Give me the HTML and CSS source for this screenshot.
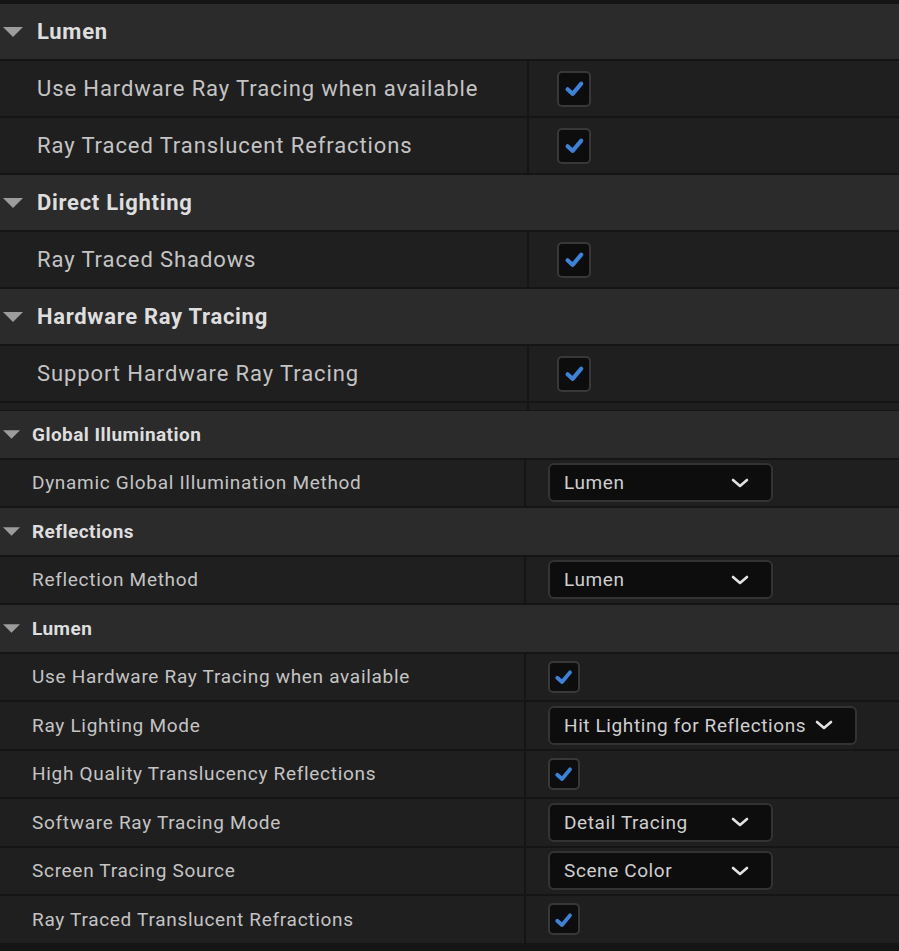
FILE: index.html
```html
<!DOCTYPE html>
<html lang="en">
    <head>
        <meta charset="utf-8" />
        <title>Project Settings - Rendering</title>
        <link rel="stylesheet" href="styles.css">
    </head>
    <body>
        <!-- upper capture, bigger zoom -->
        <section class="panel big">
            <div class="cat"><svg class="arrow" viewBox="0 0 20 10"><polygon points="0,0 20,0 10,10"/></svg>Lumen</div>
            <div class="prop">
                <div class="name">Use Hardware Ray Tracing when available</div>
                <div class="value"><span class="check"><svg viewBox="0 0 20 20"><polyline points="4,11 8.5,15 16,6"/></svg></span></div>
            </div>
            <div class="prop">
                <div class="name">Ray Traced Translucent Refractions</div>
                <div class="value"><span class="check"><svg viewBox="0 0 20 20"><polyline points="4,11 8.5,15 16,6"/></svg></span></div>
            </div>
            <div class="cat"><svg class="arrow" viewBox="0 0 20 10"><polygon points="0,0 20,0 10,10"/></svg>Direct Lighting</div>
            <div class="prop">
                <div class="name">Ray Traced Shadows</div>
                <div class="value"><span class="check"><svg viewBox="0 0 20 20"><polyline points="4,11 8.5,15 16,6"/></svg></span></div>
            </div>
            <div class="cat"><svg class="arrow" viewBox="0 0 20 10"><polygon points="0,0 20,0 10,10"/></svg>Hardware Ray Tracing</div>
            <div class="prop">
                <div class="name">Support Hardware Ray Tracing</div>
                <div class="value"><span class="check"><svg viewBox="0 0 20 20"><polyline points="4,11 8.5,15 16,6"/></svg></span></div>
            </div>
            <div class="prop stub"><div class="name"></div><div class="value"></div></div>
        </section>

        <!-- lower capture -->
        <section class="panel small">
            <div class="cat"><svg class="arrow" viewBox="0 0 20 10"><polygon points="0,0 20,0 10,10"/></svg>Global Illumination</div>
            <div class="prop">
                <div class="name">Dynamic Global Illumination Method</div>
                <div class="value"><span class="combo"><span>Lumen</span><svg viewBox="0 0 18 10"><polyline points="2,2 9,8 16,2"/></svg></span></div>
            </div>
            <div class="cat"><svg class="arrow" viewBox="0 0 20 10"><polygon points="0,0 20,0 10,10"/></svg>Reflections</div>
            <div class="prop">
                <div class="name">Reflection Method</div>
                <div class="value"><span class="combo"><span>Lumen</span><svg viewBox="0 0 18 10"><polyline points="2,2 9,8 16,2"/></svg></span></div>
            </div>
            <div class="cat"><svg class="arrow" viewBox="0 0 20 10"><polygon points="0,0 20,0 10,10"/></svg>Lumen</div>
            <div class="prop">
                <div class="name">Use Hardware Ray Tracing when available</div>
                <div class="value"><span class="check"><svg viewBox="0 0 20 20"><polyline points="4,11 8.5,15 16,6"/></svg></span></div>
            </div>
            <div class="prop">
                <div class="name">Ray Lighting Mode</div>
                <div class="value"><span class="combo"><span>Hit Lighting for Reflections</span><svg viewBox="0 0 18 10"><polyline points="2,2 9,8 16,2"/></svg></span></div>
            </div>
            <div class="prop">
                <div class="name">High Quality Translucency Reflections</div>
                <div class="value"><span class="check"><svg viewBox="0 0 20 20"><polyline points="4,11 8.5,15 16,6"/></svg></span></div>
            </div>
            <div class="prop">
                <div class="name">Software Ray Tracing Mode</div>
                <div class="value"><span class="combo"><span>Detail Tracing</span><svg viewBox="0 0 18 10"><polyline points="2,2 9,8 16,2"/></svg></span></div>
            </div>
            <div class="prop">
                <div class="name">Screen Tracing Source</div>
                <div class="value"><span class="combo"><span>Scene Color</span><svg viewBox="0 0 18 10"><polyline points="2,2 9,8 16,2"/></svg></span></div>
            </div>
            <div class="prop">
                <div class="name">Ray Traced Translucent Refractions</div>
                <div class="value"><span class="check"><svg viewBox="0 0 20 20"><polyline points="4,11 8.5,15 16,6"/></svg></span></div>
            </div>
        </section>
    </body>
</html>
```

FILE: styles.css
```css
*{ margin:0; padding:0; box-sizing:border-box; }
body{ background:#151515;
    font-family: Roboto, "Liberation Sans", sans-serif;
    color:#c4c4c4; }

.panel{ display:flex; flex-direction:column; gap:2px; background:#151515; }

.cat{ display:flex; align-items:center;
    background:#2b2b2b; color:#dedede; font-weight:700; }
.arrow{ fill:#9c9c9c; }

.prop{ display:grid; gap:2px; }
.name, .value{ display:flex; align-items:center; background:#1f1f1f; }

/* checkbox */
.check{ display:flex; align-items:center; justify-content:center;
    background:#0d0d0d; border:2px solid #383838; border-radius:5px; }
.check svg{ width:76%; height:76%; fill:none; stroke:#3b82d9;
    stroke-width:3.6; stroke-linecap:round; stroke-linejoin:round; }

/* dropdown */
.combo{ display:flex; align-items:center; justify-content:space-between;
    min-width:225px; height:39px; padding:0 22px 0 14px; gap:9px;
    background:#0d0d0d; border:2px solid #333; border-radius:6px; color:#cfcfcf; }
.combo svg{ width:18px; height:10px; fill:none; stroke:#e2e2e2;
    stroke-width:2.6; stroke-linecap:round; stroke-linejoin:round; }

/* upper capture */
.big{ padding-top:4px; }
.big .cat, .big .prop{ height:55px; }
.big .cat{ font-size:22px; letter-spacing:.7px; }
.big .arrow{ width:20px; height:10px; margin:0 14px 0 3px; }
.big .prop{ grid-template-columns:527px 1fr; }
.big .name{ padding-left:37px; font-size:22px; letter-spacing:.9px; }
.big .value{ padding-left:28px; }
.big .check{ width:34px; height:36px; }
.big .prop.stub{ height:7px; }

/* lower capture */
.small{ padding-top:1px; }
.small .cat, .small .prop{ height:46.5px; }
.small .cat{ font-size:19px; letter-spacing:.45px; }
.small .arrow{ width:17px; height:9px; margin:0 12px 0 3px; }
.small .prop{ grid-template-columns:524px 1fr; }
.small .name{ padding-left:32px; font-size:19px; letter-spacing:.7px; }
.small .value{ padding-left:22px; }
.small .check{ width:32px; height:32px; }
.small .combo{ font-size:19px; letter-spacing:.6px; }
```
